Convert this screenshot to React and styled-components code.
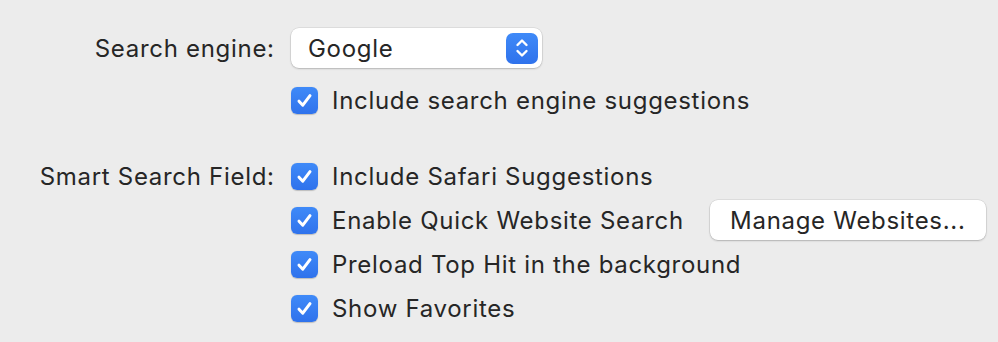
import React from "react";
import styled, { createGlobalStyle } from "styled-components";

const Global = createGlobalStyle`
  html, body { margin: 0; padding: 0; background: #ececec; }
  body {
    font-family: Inter, "Noto Sans", "Liberation Sans", sans-serif;
    color: #262626;
    -webkit-font-smoothing: antialiased;
  }
`;

const Page = styled.div`
  width: 998px;
  height: 342px;
  box-sizing: border-box;
  padding-top: 28px;
  background: #ececec;
  display: flex;
  flex-direction: column;
`;

const Section = styled.div`
  display: flex;
  flex-direction: column;
  margin-top: ${(p) => p.$top || 0}px;
`;

const Row = styled.div`
  display: grid;
  grid-template-columns: 274px 1fr;
  column-gap: 17px;
  align-items: center;
  height: ${(p) => p.$h || 44}px;
  margin-top: ${(p) => p.$mt || 0}px;
`;

const textStyle = `
  font-size: 24px;
  letter-spacing: 0.7px;
  white-space: nowrap;
`;

const Label = styled.div`
  text-align: right;
  ${textStyle}
  margin-right: -0.7px;
`;

const Controls = styled.div`
  display: flex;
  align-items: center;
`;

const Popup = styled.div`
  width: 251px;
  height: 40px;
  box-sizing: border-box;
  background: #fff;
  border-radius: 8px;
  box-shadow: 0 0 0 0.5px rgba(0, 0, 0, 0.12), 0 1px 2px rgba(0, 0, 0, 0.18);
  display: flex;
  align-items: center;
  justify-content: space-between;
  padding: 0 4px 0 17px;
  ${textStyle}
`;

const Stepper = styled.div`
  width: 32px;
  height: 31px;
  border-radius: 7px;
  background: linear-gradient(#3f8af8, #2f72ec);
  display: flex;
  align-items: center;
  justify-content: center;
`;

const CheckLabel = styled.label`
  display: flex;
  align-items: center;
  gap: 14px;
  ${textStyle}
`;

const Box = styled.span`
  width: 27px;
  height: 27px;
  border-radius: 6px;
  background: linear-gradient(#3f8af8, #2f72ec);
  box-shadow: 0 0.5px 1px rgba(0, 0, 0, 0.2);
  display: flex;
  align-items: center;
  justify-content: center;
  flex: none;
`;

const Button = styled.button`
  margin-left: 26px;
  width: 276px;
  height: 40px;
  border: none;
  border-radius: 8px;
  background: #fff;
  box-shadow: 0 0 0 0.5px rgba(0, 0, 0, 0.12), 0 1px 2px rgba(0, 0, 0, 0.2);
  font-family: inherit;
  ${textStyle}
  color: #262626;
  padding: 0;
`;

function Check({ children }) {
  return (
    <CheckLabel>
      <Box>
        <svg width="17" height="17" viewBox="0 0 17 17">
          <path
            d="M3 9.2 L6.8 13.2 L14 3.6"
            fill="none"
            stroke="#fff"
            strokeWidth="3"
            strokeLinecap="round"
            strokeLinejoin="round"
          />
        </svg>
      </Box>
      {children}
    </CheckLabel>
  );
}

export default function App() {
  return (
    <>
      <Global />
      <Page>
        <Row $h={40}>
          <Label>Search engine:</Label>
          <Controls>
            <Popup>
              Google
              <Stepper>
                <svg width="14" height="22" viewBox="0 0 14 22">
                  <path
                    d="M2.5 8 L7 3.5 L11.5 8 M2.5 14 L7 18.5 L11.5 14"
                    fill="none"
                    stroke="#fff"
                    strokeWidth="2.4"
                    strokeLinecap="round"
                    strokeLinejoin="round"
                  />
                </svg>
              </Stepper>
            </Popup>
          </Controls>
        </Row>
        <Row $mt={10}>
          <span />
          <Controls>
            <Check>Include search engine suggestions</Check>
          </Controls>
        </Row>
        <Section $top={32}>
          <Row>
            <Label>Smart Search Field:</Label>
            <Controls>
              <Check>Include Safari Suggestions</Check>
            </Controls>
          </Row>
          <Row>
            <span />
            <Controls>
              <Check>Enable Quick Website Search</Check>
              <Button>Manage Websites...</Button>
            </Controls>
          </Row>
          <Row>
            <span />
            <Controls>
              <Check>Preload Top Hit in the background</Check>
            </Controls>
          </Row>
          <Row>
            <span />
            <Controls>
              <Check>Show Favorites</Check>
            </Controls>
          </Row>
        </Section>
      </Page>
    </>
  );
}
